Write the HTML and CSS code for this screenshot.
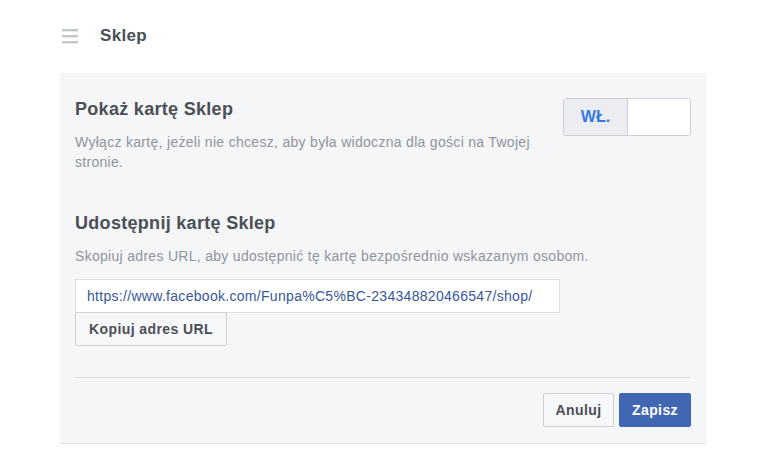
FILE: index.html
```html
<!DOCTYPE html>
<html lang="pl">
<head>
<meta charset="utf-8">
<title>Sklep</title>
<link rel="stylesheet" href="styles.css">
</head>
<body>
<header class="topbar">
  <svg class="menu-icon" width="16" height="16" viewBox="0 0 16 16" aria-hidden="true">
    <rect x="0" y="1" width="16" height="2.4" fill="#c4c7cc"/>
    <rect x="0" y="7" width="16" height="2.4" fill="#c4c7cc"/>
    <rect x="0" y="13" width="16" height="2.4" fill="#c4c7cc"/>
  </svg>
  <h1 class="title">Sklep</h1>
</header>
<main class="panel">
  <section class="row">
    <div class="row-text">
      <h2 class="heading">Pokaż kartę Sklep</h2>
      <p class="desc">Wyłącz kartę, jeżeli nie chcesz, aby była widoczna dla gości na Twojej stronie.</p>
    </div>
    <div class="toggle">
      <span class="toggle-on">WŁ.</span>
      <span class="toggle-off"></span>
    </div>
  </section>
  <section class="share">
    <h2 class="heading">Udostępnij kartę Sklep</h2>
    <p class="desc">Skopiuj adres URL, aby udostępnić tę kartę bezpośrednio wskazanym osobom.</p>
    <div class="url-box">https://www.facebook.com/Funpa%C5%BC-234348820466547/shop/</div>
    <button class="btn">Kopiuj adres URL</button>
  </section>
  <footer class="actions">
    <button class="btn">Anuluj</button>
    <button class="btn btn-primary">Zapisz</button>
  </footer>
</main>
</body>
</html>
```
FILE: styles.css
```css
* { box-sizing: border-box; }
html, body { margin: 0; padding: 0; background: #fff; }
body {
  font-family: "Liberation Sans", Arial, sans-serif;
  color: #4b4f56;
  letter-spacing: 0.3px;
  width: 763px;
  height: 452px;
  overflow: hidden;
}
.topbar {
  display: flex;
  align-items: center;
  height: 73px;
  padding-left: 62px;
  padding-bottom: 1px;
}
.menu-icon { display: block; }
.title {
  margin: 0 0 0 22px;
  font-size: 17px;
  font-weight: bold;
  color: #4b4f56;
}
.panel {
  margin-left: 60px;
  width: 646px;
  height: 371px;
  background: #f5f6f7;
  border-bottom: 1px solid #dddfe2;
  padding: 25px 15px 0 15px;
}
.row {
  display: flex;
  justify-content: space-between;
  align-items: flex-start;
}
.row-text { width: 475px; }
.heading {
  margin: 0;
  font-size: 18px;
  line-height: 22px;
  font-weight: bold;
  color: #4b4f56;
}
.desc {
  margin: 12px 0 0;
  font-size: 14px;
  line-height: 20px;
  color: #90949c;
}
.toggle {
  display: flex;
  width: 128px;
  height: 38px;
  border: 1px solid #ccd0d5;
  border-radius: 3px;
  overflow: hidden;
}
.toggle-on {
  width: 64px;
  background: #ebedf0;
  border-right: 1px solid #ccd0d5;
  color: #3578e5;
  font-weight: bold;
  font-size: 16px;
  letter-spacing: 0;
  display: flex;
  align-items: center;
  justify-content: center;
}
.toggle-off { flex: 1; background: #fff; }
.share { margin-top: 40px; }
.url-box {
  margin-top: 13px;
  width: 485px;
  height: 34px;
  background: #fff;
  border: 1px solid #dddfe2;
  padding: 0 11px;
  font-size: 14px;
  line-height: 32px;
  color: #365899;
  white-space: nowrap;
}
.btn {
  font-family: "Liberation Sans", Arial, sans-serif;
  font-size: 14px;
  font-weight: bold;
  letter-spacing: 0.4px;
  color: #4b4f56;
  background: #f6f7f9;
  border: 1px solid #ced0d4;
  border-radius: 2px;
  height: 34px;
  padding: 0 13px;
  margin: 0;
  cursor: pointer;
}
.share .btn { display: block; width: 152px; margin-top: -1px; }
.actions {
  margin-top: 31px;
  border-top: 1px solid #dddfe2;
  padding-top: 15px;
  display: flex;
  justify-content: flex-end;
  gap: 5px;
}
.btn-primary {
  background: #4267b2;
  border-color: #4267b2;
  color: #fff;
}
.actions .btn { width: 71px; padding: 0; }
.actions .btn-primary { width: 72px; }
```
